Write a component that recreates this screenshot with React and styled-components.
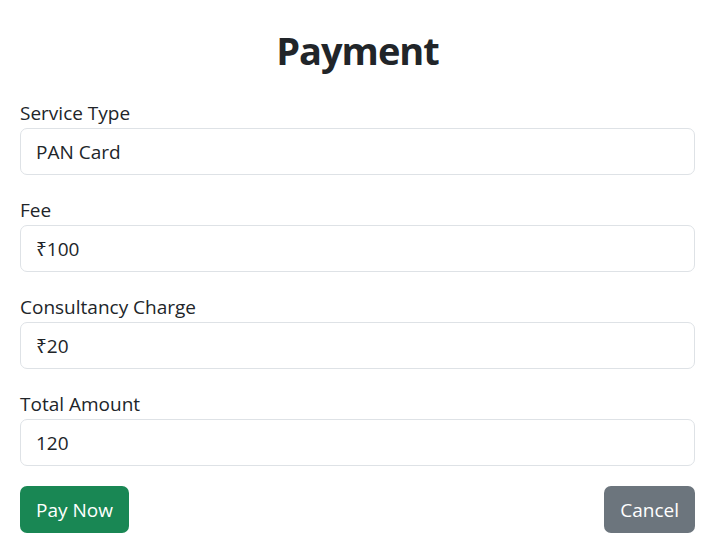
import React from 'react';
import styled, { createGlobalStyle } from 'styled-components';

const GlobalStyle = createGlobalStyle`
  body {
    margin: 0;
    background: #fff;
    color: #212529;
    font-family: "Open Sans", "Noto Sans", sans-serif;
  }
`;

const Page = styled.div`
  padding: 26px 17px 20px 20px;
`;

const Title = styled.h2`
  margin: 0 0 24px 0;
  text-align: center;
  font-size: 38px;
  letter-spacing: -1px;
  line-height: 48px;
  font-weight: 700;
`;

const Form = styled.form`
  display: flex;
  flex-direction: column;
  gap: 20px;
`;

const Group = styled.div`
  display: flex;
  flex-direction: column;
`;

const Label = styled.label`
  font-size: 19px;
  line-height: 30px;
  padding-top: 1px;
  margin-top: -1px;
`;

const Input = styled.input`
  box-sizing: border-box;
  width: 100%;
  height: 47px;
  padding: 0 15px;
  font-family: inherit;
  font-size: 19px;
  color: #212529;
  background: #fff;
  border: 1px solid #dee2e6;
  border-radius: 7px;
  outline: none;
`;

const Actions = styled.div`
  display: flex;
  justify-content: space-between;
`;

const Button = styled.button`
  height: 47px;
  padding: 0 16px;
  font-family: inherit;
  font-size: 19px;
  color: #fff;
  border: none;
  border-radius: 7px;
  background: ${p => (p.$variant === 'secondary' ? '#6c757d' : '#198754')};
  cursor: pointer;
`;

const fields = [
  { label: 'Service Type', value: 'PAN Card' },
  { label: 'Fee', value: '₹100' },
  { label: 'Consultancy Charge', value: '₹20' },
  { label: 'Total Amount', value: '120' },
];

export default function App() {
  return (
    <>
      <GlobalStyle />
      <Page>
        <Title>Payment</Title>
        <Form onSubmit={e => e.preventDefault()}>
          {fields.map(f => (
            <Group key={f.label}>
              <Label>{f.label}</Label>
              <Input defaultValue={f.value} readOnly />
            </Group>
          ))}
          <Actions>
            <Button type="submit">Pay Now</Button>
            <Button type="button" $variant="secondary">Cancel</Button>
          </Actions>
        </Form>
      </Page>
    </>
  );
}
